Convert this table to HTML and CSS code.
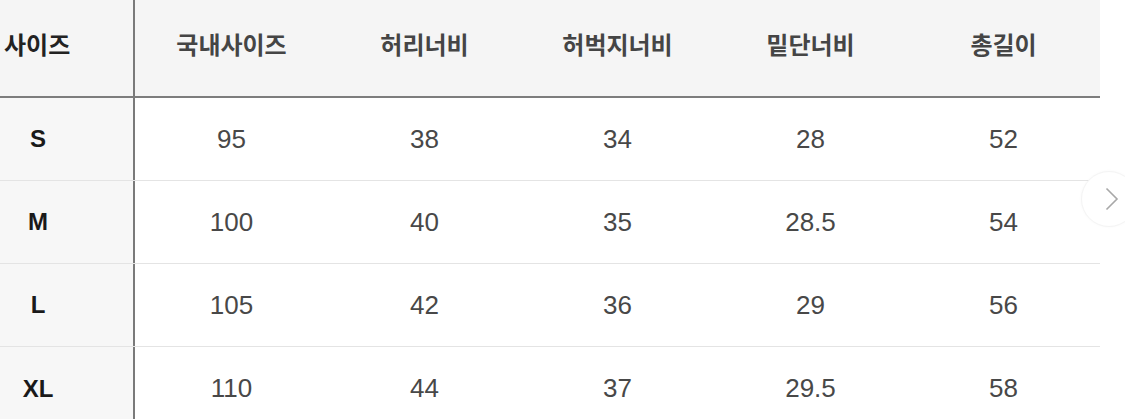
FILE: index.html
```html
<!DOCTYPE html>
<html lang="ko">
<head>
<meta charset="utf-8">
<link rel="stylesheet" href="styles.css">
</head>
<body>
<div class="wrap">
  <div class="size-table">
    <div class="row head">
      <div class="cell first"><span class="label">사이즈</span></div>
      <div class="cell">국내사이즈</div>
      <div class="cell">허리너비</div>
      <div class="cell">허벅지너비</div>
      <div class="cell">밑단너비</div>
      <div class="cell">총길이</div>
    </div>
    <div class="row">
      <div class="cell first"><span class="sz">S</span></div>
      <div class="cell">95</div><div class="cell">38</div><div class="cell">34</div><div class="cell">28</div><div class="cell">52</div>
    </div>
    <div class="row">
      <div class="cell first"><span class="sz">M</span></div>
      <div class="cell">100</div><div class="cell">40</div><div class="cell">35</div><div class="cell">28.5</div><div class="cell">54</div>
    </div>
    <div class="row">
      <div class="cell first"><span class="sz">L</span></div>
      <div class="cell">105</div><div class="cell">42</div><div class="cell">36</div><div class="cell">29</div><div class="cell">56</div>
    </div>
    <div class="row last">
      <div class="cell first"><span class="sz">XL</span></div>
      <div class="cell">110</div><div class="cell">44</div><div class="cell">37</div><div class="cell">29.5</div><div class="cell">58</div>
    </div>
  </div>
  <button class="next" aria-label="다음">
    <svg width="14" height="24" viewBox="0 0 14 24"><path d="M1.5 1.5 L12 12 L1.5 22.5" fill="none" stroke="#a8a8a8" stroke-width="1.6"/></svg>
  </button>
</div>
</body>
</html>
```
FILE: styles.css
```css
html, body {
  margin: 0;
  padding: 0;
  background: #ffffff;
}
body {
  width: 1125px;
  height: 419px;
  overflow: hidden;
  font-family: "Liberation Sans", "Noto Sans CJK KR", sans-serif;
}
.wrap {
  position: relative;
  width: 1125px;
  height: 419px;
}
.size-table {
  width: 1100px;
  display: flex;
  flex-direction: column;
}
.row {
  display: grid;
  grid-template-columns: 135px repeat(5, 193px);
  height: 83px;
  border-bottom: 1px solid #e4e4e4;
  box-sizing: border-box;
}
.row.head {
  height: 98px;
  background: #f5f5f5;
  border-bottom: 2px solid #7d7d7d;
}
.row.last {
  border-bottom: none;
}
.cell {
  display: flex;
  align-items: center;
  justify-content: center;
  font-size: 26px;
  color: #484848;
  box-sizing: border-box;
}
.head .cell {
  font-family: "Noto Sans CJK KR", sans-serif;
  font-weight: 700;
  font-size: 24px;
  color: #454545;
  padding-bottom: 10px;
}
.cell.first {
  justify-content: flex-start;
  background: #f7f7f7;
  border-right: 2px solid #7a7a7a;
}
.head .cell.first {
  background: #f5f5f5;
}
.label {
  padding-left: 4px;
  font-weight: 700;
  color: #222;
}
.sz {
  width: 76px;
  text-align: center;
  font-weight: 700;
  font-size: 24px;
  color: #1a1a1a;
}
.next {
  position: absolute;
  left: 1081px;
  top: 171px;
  width: 56px;
  height: 56px;
  border-radius: 50%;
  border: 1px solid #f4f4f4;
  background: #ffffff;
  box-shadow: 0 0 3px rgba(0, 0, 0, 0.03);
  display: flex;
  align-items: center;
  justify-content: flex-start;
  padding: 0 0 0 23px;
  box-sizing: border-box;
}
```
